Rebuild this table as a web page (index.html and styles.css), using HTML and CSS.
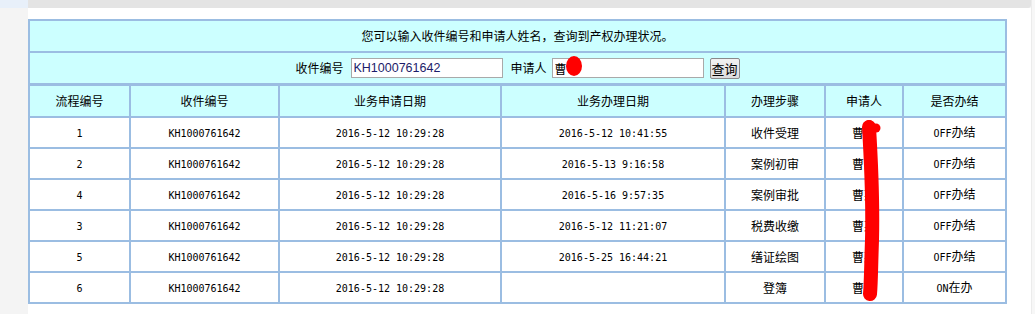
FILE: index.html
```html
<!DOCTYPE html>
<html lang="zh-CN">
<head>
<meta charset="utf-8">
<title>产权办理状况查询</title>
<link rel="stylesheet" href="styles.css">
</head>
<body>
<div class="page">
  <div class="side"><div class="side-top"></div></div>
  <div class="main">
    <div class="topbar"></div>
    <div class="panel">
      <table class="grid">
        <colgroup>
          <col class="c1"><col class="c2"><col class="c3"><col class="c4"><col class="c5"><col class="c6"><col class="c7">
        </colgroup>
        <tr class="title"><td colspan="7">您可以输入收件编号和申请人姓名，查询到产权办理状况。</td></tr>
        <tr class="search">
          <td colspan="7">
            <div class="form">
              <span class="label">收件编号</span>
              <input class="field f1" type="text" value="KH1000761642">
              <span class="label l2">申请人</span>
              <input class="field f2" type="text" value="曹">
              <button class="btn" type="button">查询</button>
            </div>
          </td>
        </tr>
        <tr class="head">
          <td>流程编号</td><td>收件编号</td><td>业务申请日期</td><td>业务办理日期</td><td>办理步骤</td><td>申请人</td><td>是否办结</td>
        </tr>
        <tr class="row">
          <td><span class="n">1</span></td><td><span class="n">KH1000761642</span></td><td><span class="n">2016-5-12 10:29:28</span></td><td><span class="n">2016-5-12 10:41:55</span></td><td>收件受理</td><td>曹某</td><td><span class="n">OFF</span>办结</td>
        </tr>
        <tr class="row">
          <td><span class="n">2</span></td><td><span class="n">KH1000761642</span></td><td><span class="n">2016-5-12 10:29:28</span></td><td><span class="n">2016-5-13 9:16:58</span></td><td>案例初审</td><td>曹某</td><td><span class="n">OFF</span>办结</td>
        </tr>
        <tr class="row">
          <td><span class="n">4</span></td><td><span class="n">KH1000761642</span></td><td><span class="n">2016-5-12 10:29:28</span></td><td><span class="n">2016-5-16 9:57:35</span></td><td>案例审批</td><td>曹某</td><td><span class="n">OFF</span>办结</td>
        </tr>
        <tr class="row">
          <td><span class="n">3</span></td><td><span class="n">KH1000761642</span></td><td><span class="n">2016-5-12 10:29:28</span></td><td><span class="n">2016-5-12 11:21:07</span></td><td>税费收缴</td><td>曹某</td><td><span class="n">OFF</span>办结</td>
        </tr>
        <tr class="row">
          <td><span class="n">5</span></td><td><span class="n">KH1000761642</span></td><td><span class="n">2016-5-12 10:29:28</span></td><td><span class="n">2016-5-25 16:44:21</span></td><td>缮证绘图</td><td>曹某</td><td><span class="n">OFF</span>办结</td>
        </tr>
        <tr class="row">
          <td><span class="n">6</span></td><td><span class="n">KH1000761642</span></td><td><span class="n">2016-5-12 10:29:28</span></td><td></td><td>登簿</td><td>曹某</td><td><span class="n">ON</span>在办</td>
        </tr>
      </table>
    </div>
  </div>
  <div class="rest"></div>
</div>
<svg class="scribble" width="1035" height="314" viewBox="0 0 1035 314" aria-hidden="true">
  <ellipse cx="574" cy="66" rx="8" ry="10" fill="#ff0000"/>
  <circle cx="869" cy="125" r="5" fill="#ff0000"/>
  <circle cx="876" cy="128" r="4.5" fill="#ff0000"/>
  <path d="M869 127 C 871 160, 873 200, 872 240 C 871 268, 871 284, 870 294" fill="none" stroke="#ff0000" stroke-width="14" stroke-linecap="round"/>
</svg>
</body>
</html>
```

FILE: styles.css
```css
html, body {
  margin: 0;
  padding: 0;
}
body {
  background: #f5f5f5;
  font-family: "Noto Sans CJK SC", "DejaVu Sans", sans-serif;
  font-size: 12px;
  color: #000;
  width: 1035px;
  height: 314px;
  overflow: hidden;
  position: relative;
}
.page {
  display: flex;
  height: 314px;
}
.side {
  width: 28px;
  flex: none;
  background: #f4f4f4;
}
.side-top {
  height: 8px;
  background: #e8f0fa;
}
.main {
  width: 1003px;
  flex: none;
  display: flex;
  flex-direction: column;
}
.topbar {
  height: 8px;
  background: #e4e4e4;
  border-bottom-right-radius: 3px;
}
.panel {
  flex: 1;
  background: #fff;
  padding-top: 11px;
}
.rest {
  flex: 1;
  border-left: 1px solid #ececec;
  background: #f7f7f7;
}
.grid {
  border-collapse: collapse;
  table-layout: fixed;
  width: 977px;
}
.c1 { width: 101px; }
.c2 { width: 149px; }
.c3 { width: 222px; }
.c4 { width: 224px; }
.c5 { width: 100px; }
.c6 { width: 78px; }
.c7 { width: 103px; }
.grid td {
  border: 2px solid #9bbde2;
  padding: 0;
  text-align: center;
  vertical-align: middle;
  line-height: 14px;
  white-space: nowrap;
}
.title td {
  background: #ccffff;
  height: 30px;
}
.search td {
  background: #ccffff;
  height: 30px;
  border-bottom-width: 3px;
}
.head td {
  background: #ccffff;
  height: 30px;
}
.row td {
  background: #fff;
  height: 29px;
}
.n {
  font-family: "DejaVu Sans Mono", "Liberation Mono", monospace;
  font-size: 10px;
}
.form {
  display: flex;
  justify-content: center;
  align-items: center;
}
.label {
  font-size: 12px;
  margin-right: 7px;
}
.l2 {
  margin-left: 8px;
  margin-right: 5px;
}
.field {
  box-sizing: border-box;
  height: 20px;
  width: 152px;
  border: 1px solid #a9a9a9;
  padding: 0 2px;
  margin: 0;
  font-family: "Liberation Sans", Arial, "Noto Sans CJK SC", sans-serif;
  font-size: 12.5px;
  color: #1c1c6a;
  background: #fff;
}
.f2 {
  color: #000;
  font-family: "Noto Sans CJK SC", sans-serif;
  font-size: 12px;
}
.btn {
  box-sizing: border-box;
  margin: 0 0 0 6px;
  height: 21px;
  width: 30px;
  padding: 0;
  border: 1px solid #8a8a8a;
  border-radius: 2px;
  background: linear-gradient(#f2f2f2, #dcdcdc);
  font-family: "Noto Sans CJK SC", sans-serif;
  font-size: 13px;
  line-height: 19px;
  color: #000;
}
.scribble {
  position: absolute;
  left: 0;
  top: 0;
  pointer-events: none;
}
```
